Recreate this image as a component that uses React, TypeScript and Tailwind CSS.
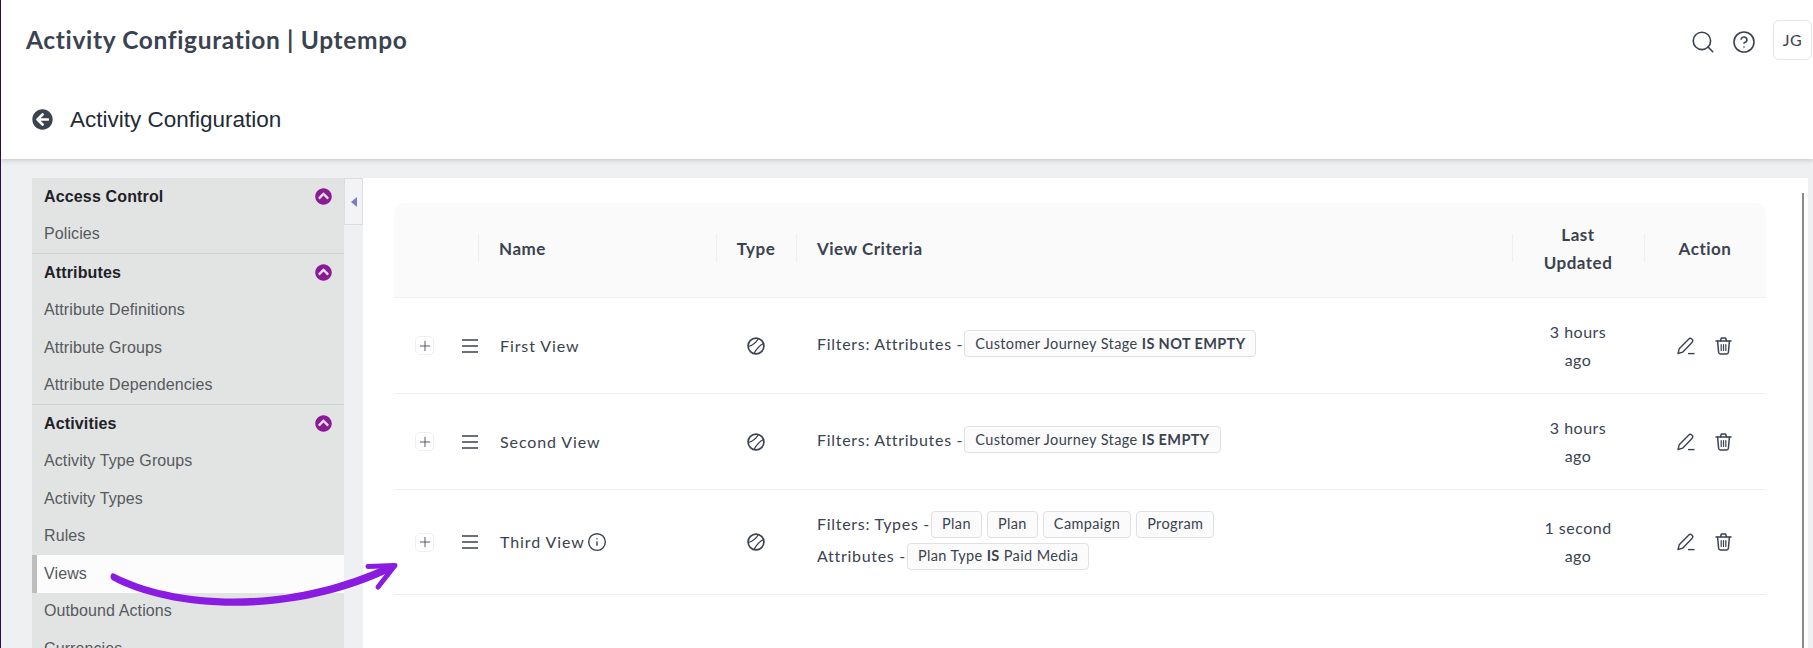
import { FaArrowCircleLeft, FaChevronCircleUp } from "react-icons/fa";
import { CircleHelp, Info, Plus, Search } from "lucide-react";

const nunito = "font-['Lato','Noto_Sans',sans-serif]";
const arial = "font-['Liberation_Sans',Arial,sans-serif]";

const sections = [
  { title: "Access Control", items: ["Policies"] },
  { title: "Attributes", items: ["Attribute Definitions", "Attribute Groups", "Attribute Dependencies"] },
  { title: "Activities", items: ["Activity Type Groups", "Activity Types", "Rules", "Views", "Outbound Actions", "Currencies"] },
];

const Chip = ({ children }: { children: React.ReactNode }) => (
  <span className="inline-flex items-center h-[27px] px-[10px] ml-[1px] mr-[4px] rounded-[4px] border border-[#dfe1e3] bg-[#fbfbfb] text-[14.5px] tracking-[0.38px] whitespace-nowrap">{children}</span>
);

const TypeIcon = () => (
  <svg width="18" height="18" viewBox="0 0 18 18" fill="none" stroke="#3a4350" strokeWidth="1.7">
    <circle cx="9" cy="9" r="7.9" />
    <path d="M11.5 1.5C9.5 5 6 8 1.5 9.5" strokeWidth="1.3" />
    <path d="M16.5 6.5C13 8 9.5 12 7 16.5" strokeWidth="1.3" />
  </svg>
);

const HamburgerIcon = () => (
  <svg width="16" height="14" viewBox="0 0 16 14" fill="none" stroke="#3a4350" strokeWidth="1.5" className="ml-[28px] shrink-0">
    <path d="M0 1H16M0 7H16M0 13H16" />
  </svg>
);

const EditIcon = () => (
  <svg width="18" height="18" viewBox="0 0 18 18" fill="none" stroke="#3a4350" strokeWidth="1.4" strokeLinejoin="round">
    <path d="M1 16.5L2.2 11.8L11.6 2.2C12.6 1.2 14 1.2 15 2.2C16 3.2 16 4.5 15 5.5L5.6 15.2L1 16.5Z" />
    <path d="M11 16.6H17.5" />
  </svg>
);

const TrashIcon = () => (
  <svg width="17" height="18" viewBox="0 0 17 18" fill="none" stroke="#3a4350" strokeWidth="1.5" strokeLinejoin="round" strokeLinecap="round" className="ml-[20px]">
    <path d="M1 4H16" />
    <path d="M5.5 3.8L6.4 1H10.6L11.5 3.8" />
    <path d="M2.6 4.2L3.6 15.2C3.7 16.2 4.4 17 5.4 17H11.6C12.6 17 13.3 16.2 13.4 15.2L14.4 4.2" />
    <path d="M6.2 7.5V13.5M8.5 7.5V13.5M10.8 7.5V13.5" strokeWidth="1.2" />
  </svg>
);

const rowBase = "grid grid-cols-[84px_238px_80px_716px_132px_122px] items-center border-b border-[#eeeff0]";

const Row = ({ name, info, time, height, children }: { name: string; info?: boolean; time: string[]; height: string; children: React.ReactNode }) => (
  <div className={`${rowBase} ${height}`}>
    <div className="flex items-center pl-[21px]">
      <span className="flex items-center justify-center shrink-0 w-[19px] h-[19px] rounded-[5px] border border-[#eeeff0]">
        <Plus size={16} strokeWidth={1.3} />
      </span>
      <HamburgerIcon />
    </div>
    <div className="flex items-center pl-[22px] text-[16px] tracking-[0.9px]">
      {name}
      {info && <Info size={20} strokeWidth={1.7} className="ml-[2px]" />}
    </div>
    <div className="flex justify-center">
      <TypeIcon />
    </div>
    <div className="pl-[21px] pb-[4px] text-[16px] tracking-[0.7px]">{children}</div>
    <div className="text-center text-[16px] leading-[28px] tracking-[0.5px]">
      {time.map((t) => (
        <div key={t}>{t}</div>
      ))}
    </div>
    <div className="flex items-center pl-[33px]">
      <EditIcon />
      <TrashIcon />
    </div>
  </div>
);

const App = () => {
  return (
    <div className={`relative w-[1813px] h-[648px] overflow-hidden bg-[#eff0f2] border-l border-[#2b0d4f] text-[#3a4350] ${nunito}`}>
      {/* top */}
      <div className="h-[159px] bg-white shadow-[0_1px_5px_rgba(0,0,0,0.2)] relative z-10">
        <div className="flex items-center h-[80px] pl-[25px] pr-[1px]">
          <p className="text-[24.5px] font-bold tracking-[0.65px]">Activity Configuration | Uptempo</p>
          <Search size={26} strokeWidth={1.5} className="ml-auto mt-[4px]" />
          <CircleHelp size={24} strokeWidth={1.6} className="ml-[16px] mt-[4px]" />
          <div className="flex items-center justify-center w-[39px] h-[40px] ml-[17px] rounded-[6px] border border-[#e3e4e6] text-[16px] tracking-[0.5px]">JG</div>
        </div>
        <div className={`flex items-center h-[79px] pl-[31px] text-[#222b36] ${arial}`}>
          <FaArrowCircleLeft size={21} className="text-[#3a4350]" />
          <p className="ml-[17px] text-[22.5px]">Activity Configuration</p>
        </div>
      </div>

      <div className="flex items-start pt-[19px] pl-[31px] pr-[5px] h-[489px]">
        {/* sidebar */}
        <div className={`w-[312px] h-[470px] shrink-0 overflow-hidden bg-[#e2e4e3] ${arial}`}>
          {sections.map((s, i) => (
            <div key={s.title} className={i < 2 ? "border-b border-[#cfd1d1]" : ""}>
              <div className="flex items-center justify-between h-[37.5px] pl-[12px] pr-[12px] font-bold text-[16px] tracking-[0.15px] text-[#1e2228]">
                {s.title}
                <FaChevronCircleUp size={17} className="text-[#8a1a96]" />
              </div>
              {s.items.map((item) => (
                <div
                  key={item}
                  className={`flex items-center h-[37.5px] text-[16px] tracking-[0.1px] text-[#555a5e] ${item === "Views" ? "pl-[7px] border-l-[5px] border-[#bdbdbd] bg-[#fcfcfc]" : "pl-[12px]"}`}
                >
                  {item}
                </div>
              ))}
            </div>
          ))}
        </div>
        {/* collapse */}
        <div className="flex items-center justify-center w-[19px] h-[47px] shrink-0 bg-[#f3f3f6] border border-[#dcdde0]">
          <span className="w-0 h-0 border-y-[5px] border-y-transparent border-r-[6px] border-r-[#7c7cc8]" />
        </div>
        {/* main */}
        <div className="relative flex-1 h-[470px] bg-white pt-[25px] pl-[31px]">
          <div className="w-[1372px]">
            <div className={`${rowBase} h-[95px] bg-[#fafafa] rounded-t-[10px] font-bold text-[17px] leading-[28px] tracking-[0.5px]`}>
              <div />
              <div className="relative pl-[21px] pb-[2px]">
                <span className="absolute left-0 top-[-1px] h-[28px] w-px bg-[#eeeff0]" />
                Name
              </div>
              <div className="relative text-center pb-[2px]">
                <span className="absolute left-0 top-[-1px] h-[28px] w-px bg-[#eeeff0]" />
                Type
              </div>
              <div className="relative pl-[21px] pb-[2px]">
                <span className="absolute left-0 top-[-1px] h-[28px] w-px bg-[#eeeff0]" />
                View Criteria
              </div>
              <div className="relative text-center pb-[2px]">
                <span className="absolute left-0 top-[13px] h-[28px] w-px bg-[#eeeff0]" />
                Last
                <br />
                Updated
              </div>
              <div className="relative text-center pb-[2px]">
                <span className="absolute left-0 top-[-1px] h-[28px] w-px bg-[#eeeff0]" />
                Action
              </div>
            </div>
            <Row name="First View" time={["3 hours", "ago"]} height="h-[96px]">
              <div className="flex items-center">
                Filters: Attributes -
                <Chip>
                  Customer Journey Stage&nbsp;<b>IS NOT EMPTY</b>
                </Chip>
              </div>
            </Row>
            <Row name="Second View" time={["3 hours", "ago"]} height="h-[96px]">
              <div className="flex items-center">
                Filters: Attributes -
                <Chip>
                  Customer Journey Stage&nbsp;<b>IS EMPTY</b>
                </Chip>
              </div>
            </Row>
            <Row name="Third View" info time={["1 second", "ago"]} height="h-[105px]">
              <div className="flex items-center h-[32px]">
                Filters: Types -<Chip>Plan</Chip>
                <Chip>Plan</Chip>
                <Chip>Campaign</Chip>
                <Chip>Program</Chip>
              </div>
              <div className="flex items-center h-[32px]">
                Attributes -
                <Chip>
                  Plan Type&nbsp;<b>IS</b>&nbsp;Paid Media
                </Chip>
              </div>
            </Row>
          </div>
          {/* scrollbar */}
          <span className="absolute right-[4px] top-[15px] bottom-0 w-[2px] bg-[#8a8a8a]" />
        </div>
      </div>

      {/* arrow */}
      <svg className="absolute left-[0px] top-[0px] z-20 pointer-events-none" width="420" height="648" viewBox="0 0 420 648" fill="none">
        <path d="M113 573.5C170 603 280 614 388 564L393 570C290 620 170 612 111 580C108 577 110 572 113 573.5Z" fill="#8a1be0" />
        <path d="M367 566.5L394 565.5L377 587" stroke="#8a1be0" strokeWidth="5" strokeLinecap="round" strokeLinejoin="round" />
      </svg>
    </div>
  );
};

export default App;
